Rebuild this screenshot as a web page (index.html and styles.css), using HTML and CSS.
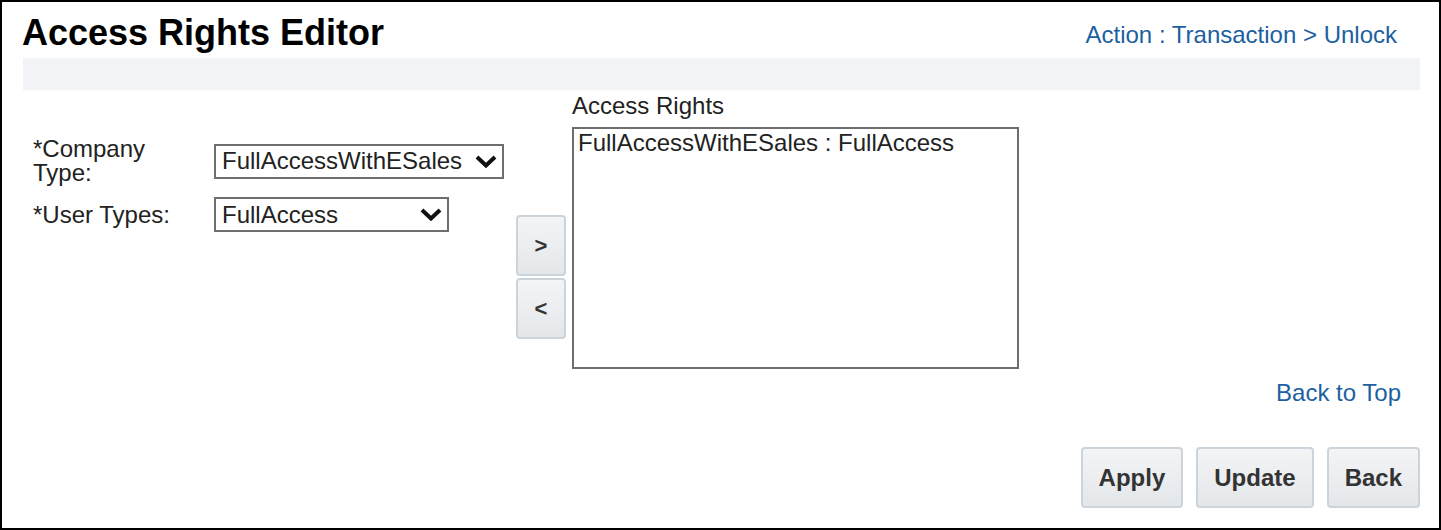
FILE: index.html
```html
<!DOCTYPE html>
<html lang="en">
<head>
<meta charset="utf-8">
<title>Access Rights Editor</title>
<link rel="stylesheet" href="styles.css">
</head>
<body>
<div class="frame">
  <div class="header">
    <h1 class="title">Access Rights Editor</h1>
    <div class="crumb">Action : Transaction &gt; Unlock</div>
  </div>
  <div class="bar"></div>
  <div class="main">
    <div class="form">
      <div class="label">*Company Type:</div>
      <div class="select select-wide">
        <span>FullAccessWithESales</span>
        <svg class="chev" width="22" height="13" viewBox="0 0 22 13"><polyline points="2,2 11,10.5 20,2" fill="none" stroke="#111" stroke-width="4"/></svg>
      </div>
      <div class="label">*User Types:</div>
      <div class="select select-narrow">
        <span>FullAccess</span>
        <svg class="chev" width="22" height="13" viewBox="0 0 22 13"><polyline points="2,2 11,10.5 20,2" fill="none" stroke="#111" stroke-width="4"/></svg>
      </div>
    </div>
    <div class="arrows">
      <button class="arrow">&gt;</button>
      <button class="arrow">&lt;</button>
    </div>
    <div class="rights">
      <div class="rights-label">Access Rights</div>
      <div class="listbox">
        <div class="item">FullAccessWithESales : FullAccess</div>
      </div>
    </div>
  </div>
  <div class="totop"><a class="link" href="#">Back to Top</a></div>
  <div class="actions">
    <button class="btn">Apply</button>
    <button class="btn">Update</button>
    <button class="btn">Back</button>
  </div>
</div>
</body>
</html>
```
FILE: styles.css
```css
* { box-sizing: border-box; }
html, body { margin: 0; padding: 0; background: #fff; }
body {
  font-family: "Liberation Sans", Arial, sans-serif;
  color: #222;
  font-size: 24px;
  line-height: 24px;
}
.frame {
  width: 1441px;
  height: 530px;
  border: 2px solid #000;
  padding: 11px 19px 0 21px;
}
.header {
  display: flex;
  justify-content: space-between;
  align-items: flex-start;
}
.title {
  margin: 0 0 0 -1px;
  font-size: 36px;
  line-height: 40px;
  font-weight: bold;
  color: #000;
}
.crumb {
  margin-top: 10px;
  margin-right: 23px;
  color: #1d5f9f;
}
.bar {
  margin-top: 5px;
  height: 32px;
  background: #f2f3f6;
}
.main {
  display: flex;
  align-items: flex-start;
  margin-top: 4px;
}
.form {
  margin-left: 10px;
  margin-top: 43px;
  width: 470px;
  display: grid;
  grid-template-columns: 150px auto;
  column-gap: 31px;
  row-gap: 12px;
  align-items: center;
}
.select {
  display: flex;
  align-items: center;
  justify-content: space-between;
  height: 35px;
  border: 2px solid #6e6e6e;
  padding: 0 5px 0 6px;
  justify-self: start;
  background: #fff;
}
.select-wide { width: 290px; }
.select-narrow { width: 235px; }
.chev { display: block; }
.arrows {
  margin-left: 13px;
  margin-top: 121px;
  display: flex;
  flex-direction: column;
  gap: 2px;
}
.arrow, .btn {
  font-family: "Liberation Sans", Arial, sans-serif;
  font-weight: bold;
  color: #333;
  background: linear-gradient(#f3f4f6, #e4e7ea);
  border: 2px solid #cbd3db;
  border-radius: 4px;
  margin: 0;
}
.arrow {
  width: 50px;
  height: 61px;
  font-size: 22px;
  padding: 0;
}
.rights {
  margin-left: 6px;
  width: 447px;
}
.listbox {
  margin-top: 9px;
  height: 242px;
  border: 2px solid #6e6e6e;
  padding: 2px 4px;
}
.totop {
  margin-top: 12px;
  margin-right: 19px;
  text-align: right;
}
.link {
  color: #1d5f9f;
  text-decoration: none;
}
.actions {
  margin-top: 42px;
  display: flex;
  justify-content: flex-end;
  gap: 13px;
}
.btn {
  height: 61px;
  font-size: 24px;
  padding: 0 16px;
}
```
